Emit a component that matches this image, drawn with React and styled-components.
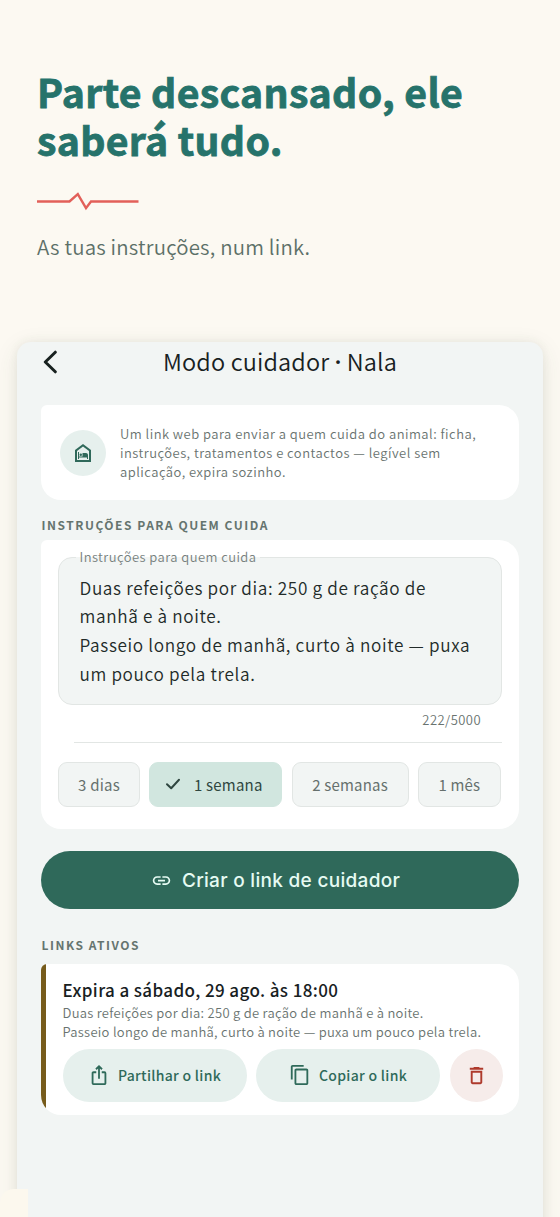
import React from 'react'
import styled, { createGlobalStyle } from 'styled-components'
import {
  MdOutlineNightShelter,
  MdLink,
  MdIosShare,
  MdContentCopy,
  MdDeleteOutline,
} from 'react-icons/md'

const durations = [
  { label: '3 dias', width: 82 },
  { label: '1 semana', width: 133, selected: true },
  { label: '2 semanas', width: 117 },
  { label: '1 mês', width: 83 },
]

function App() {
  return (
    <Page>
      <GlobalStyle />
      <Intro>
        <Headline>Parte descansado, ele<br />saberá tudo.</Headline>
        <Pulse width="102" height="20" viewBox="0 0 102 20">
          <path d="M0 10.5H32.5L40.8 3.2L49 17.2L54 10.5H101.5" />
        </Pulse>
        <Tagline>As tuas instruções, num link.</Tagline>
      </Intro>

      <Phone>
        <TopBar>
          <BackIcon width="16" height="24" viewBox="0 0 16 24">
            <path d="M14.3 2.2L4.3 12L14.3 21.8" />
          </BackIcon>
          <ScreenTitle>Modo cuidador <Dot>·</Dot> Nala</ScreenTitle>
        </TopBar>

        <InfoCard>
          <InfoBadge>
            <MdOutlineNightShelter size={24} />
          </InfoBadge>
          <InfoText>
            Um link web para enviar a quem cuida do animal: ficha,<br />
            instruções, tratamentos e contactos — legível sem<br />
            aplicação, expira sozinho.
          </InfoText>
        </InfoCard>

        <SectionTitle>INSTRUÇÕES PARA QUEM CUIDA</SectionTitle>
        <FormCard>
          <Field>
            <FieldLabel>Instruções para quem cuida</FieldLabel>
            <FieldText>
              Duas refeições por dia: 250 g de ração de<br />
              manhã e à noite.<br />
              Passeio longo de manhã, curto à noite — puxa<br />
              um pouco pela trela.
            </FieldText>
          </Field>
          <Counter>222/5000</Counter>
          <Divider />
          <Chips>
            {durations.map((d) => (
              <Chip key={d.label} $width={d.width} $selected={d.selected}>
                {d.selected && (
                  <CheckIcon width="16" height="14" viewBox="0 0 16 14">
                    <path d="M2 7.2L6.2 11.2L14 2.8" />
                  </CheckIcon>
                )}
                {d.label}
              </Chip>
            ))}
          </Chips>
        </FormCard>

        <CreateButton>
          <MdLink size={21} />
          Criar o link de cuidador
        </CreateButton>

        <LinksTitle>LINKS ATIVOS</LinksTitle>
        <LinkCard>
          <Accent />
          <LinkBody>
            <LinkExpiry>Expira a sábado, 29 ago. às 18:00</LinkExpiry>
            <LinkText>
              Duas refeições por dia: 250 g de ração de manhã e à noite.<br />
              Passeio longo de manhã, curto à noite — puxa um pouco pela trela.
            </LinkText>
            <Actions>
              <ActionButton>
                <MdIosShare size={22} />
                Partilhar o link
              </ActionButton>
              <ActionButton>
                <MdContentCopy size={22} />
                Copiar o link
              </ActionButton>
              <DeleteButton>
                <MdDeleteOutline size={23} />
              </DeleteButton>
            </Actions>
          </LinkBody>
        </LinkCard>
      </Phone>
      <Corner />
    </Page>
  )
}

const GlobalStyle = createGlobalStyle`
  * {
    box-sizing: border-box;
  }
  body {
    margin: 0;
    background: #fcf9f2;
    font-family: 'Noto Sans CJK SC', 'Noto Sans', sans-serif;
    font-weight: 350;
  }
  h1, h2, h3, p {
    margin: 0;
    white-space: nowrap;
  }
  button {
    border: none;
    padding: 0;
    font-family: inherit;
    white-space: nowrap;
  }
  svg {
    display: block;
    flex-shrink: 0;
  }
`;

const Page = styled.div`
  position: relative;
  width: 560px;
  height: 1217px;
  overflow: hidden;
  background: #fcf9f2;
`;

const Intro = styled.header`
  height: 342px;
  padding: 67px 0 0 37px;
`;

const Headline = styled.h1`
  font-size: 39.2px;
  font-weight: 700;
  line-height: 48px;
  letter-spacing: 0.32px;
  color: #26736b;
  -webkit-text-stroke: 0.8px #26736b;
`;

const Pulse = styled.svg`
  margin-top: 27.5px;
  path {
    fill: none;
    stroke: #e2605a;
    stroke-width: 2.4;
  }
`;

const Tagline = styled.p`
  margin-top: 19px;
  font-size: 20.4px;
  line-height: 32px;
  letter-spacing: 0.2px;
  color: #5c7068;
`;

const Phone = styled.main`
  width: 526px;
  height: 900px;
  margin: 0 auto;
  padding: 0 24px;
  border-radius: 14px;
  background: #f2f5f4;
  box-shadow: 0 0 10px rgba(60, 75, 70, 0.08), 0 6px 24px rgba(60, 75, 60, 0.1);
`;

const TopBar = styled.div`
  display: grid;
  grid-template-columns: 24px 1fr 24px;
  align-items: center;
  height: 40px;
`;

const BackIcon = styled.svg`
  path {
    fill: none;
    stroke: #18211f;
    stroke-width: 3;
    stroke-linecap: round;
    stroke-linejoin: round;
  }
`;

const ScreenTitle = styled.h2`
  font-size: 23.5px;
  font-weight: 350;
  line-height: 36px;
  margin-top: -2px;
  text-align: center;
  letter-spacing: 0.15px;
  color: #18211f;
`;

const Dot = styled.span`
  font-family: 'Noto Sans', sans-serif;
  font-weight: 600;
  line-height: 1;
`;

const Card = styled.section`
  border-radius: 6px 20px 20px 20px;
  background: #fff;
`;

const InfoCard = styled(Card)`
  display: flex;
  align-items: center;
  height: 95px;
  margin-top: 23px;
  padding-left: 19px;
`;

const InfoBadge = styled.div`
  display: flex;
  align-items: center;
  justify-content: center;
  width: 46px;
  height: 46px;
  border-radius: 50%;
  background: #e6f0ed;
  color: #2f695a;
`;

const InfoText = styled.p`
  margin-left: 14px;
  font-size: 13px;
  line-height: 19px;
  letter-spacing: 0.47px;
  color: #69736f;
`;

const SectionTitle = styled.h3`
  margin: 15px 0 0 0.5px;
  font-size: 12px;
  font-weight: 700;
  line-height: 20px;
  letter-spacing: 1.52px;
  color: #65746f;
`;

const FormCard = styled(Card)`
  height: 289px;
  margin-top: 5px;
  padding: 17px 17px 0;
`;

const Field = styled.div`
  position: relative;
  height: 148px;
  padding: 15.5px 0 0 20.5px;
  border: 1px solid #e2e6e4;
  border-radius: 14px;
  background: #f2f5f4;
`;

const FieldLabel = styled.span`
  position: absolute;
  top: -11px;
  left: 16.5px;
  padding: 0 4px;
  font-size: 13px;
  line-height: 20px;
  letter-spacing: 0.43px;
  white-space: nowrap;
  color: #77817e;
  background: linear-gradient(#fff 50%, #f2f5f4 50%);
`;

const FieldText = styled.p`
  font-size: 17.2px;
  line-height: 28.8px;
  letter-spacing: 0.64px;
  color: #222b29;
`;

const Counter = styled.p`
  margin: 5px 21px 0 0;
  font-size: 13px;
  line-height: 20px;
  letter-spacing: 0.45px;
  text-align: right;
  color: #69736f;
`;

const Divider = styled.div`
  height: 1px;
  margin: 12px 0 19px 16px;
  background: #e2e6e4;
`;

const Chips = styled.div`
  display: flex;
  gap: 9.3px;
`;

const Chip = styled.button`
  display: flex;
  align-items: center;
  justify-content: center;
  gap: 13px;
  width: ${(p) => p.$width}px;
  height: 45px;
  padding: ${(p) => (p.$selected ? '0 4px 1px 0' : '0 0 1px')};
  border: 1px solid ${(p) => (p.$selected ? '#d1e6df' : '#e2e6e4')};
  border-radius: 9px;
  background: ${(p) => (p.$selected ? '#d1e6df' : '#f2f5f4')};
  font-size: 15px;
  letter-spacing: 0.2px;
  color: ${(p) => (p.$selected ? '#2f4640' : '#66706d')};
`;

const CheckIcon = styled.svg`
  path {
    fill: none;
    stroke: #2f4640;
    stroke-width: 2;
    stroke-linecap: round;
    stroke-linejoin: round;
  }
`;

const CreateButton = styled.button`
  display: flex;
  align-items: center;
  justify-content: center;
  gap: 10px;
  width: 100%;
  height: 58px;
  margin-top: 22px;
  padding-right: 9px;
  border-radius: 29px;
  background: #2f695a;
  font-family: Inter, sans-serif;
  font-size: 19px;
  font-weight: 500;
  letter-spacing: 0.3px;
  color: #e6fbf3;
`;

const LinksTitle = styled(SectionTitle)`
  margin-top: 26px;
`;

const LinkCard = styled(Card)`
  display: flex;
  height: 151px;
  margin-top: 9px;
  overflow: hidden;
`;

const Accent = styled.div`
  width: 5px;
  background: #765b1b;
`;

const LinkBody = styled.div`
  padding: 14px 0 0 16.5px;
`;

const LinkExpiry = styled.h3`
  font-size: 17px;
  font-weight: 500;
  line-height: 24px;
  letter-spacing: 0.39px;
  color: #18211f;
`;

const LinkText = styled.p`
  margin-top: 0.5px;
  font-size: 13px;
  line-height: 19px;
  letter-spacing: 0.28px;
  color: #69736f;
`;

const Actions = styled.div`
  display: flex;
  gap: 9.5px;
  margin: 8.5px 0 0;
`;

const ActionButton = styled.button`
  display: flex;
  align-items: center;
  justify-content: center;
  gap: 8px;
  width: 184px;
  height: 53px;
  padding-bottom: 1px;
  border-radius: 27px;
  background: #e6f0ed;
  font-size: 14px;
  font-weight: 500;
  letter-spacing: 0.3px;
  color: #2f6a5a;
`;

const DeleteButton = styled(ActionButton)`
  width: 53px;
  background: #f6ecea;
  color: #ae3a2c;
`;

const Corner = styled.div`
  position: absolute;
  left: 0;
  bottom: 0;
  width: 28px;
  height: 28px;
  border-top-left-radius: 14px;
  background: #fcf8ee;
`;

export default App
